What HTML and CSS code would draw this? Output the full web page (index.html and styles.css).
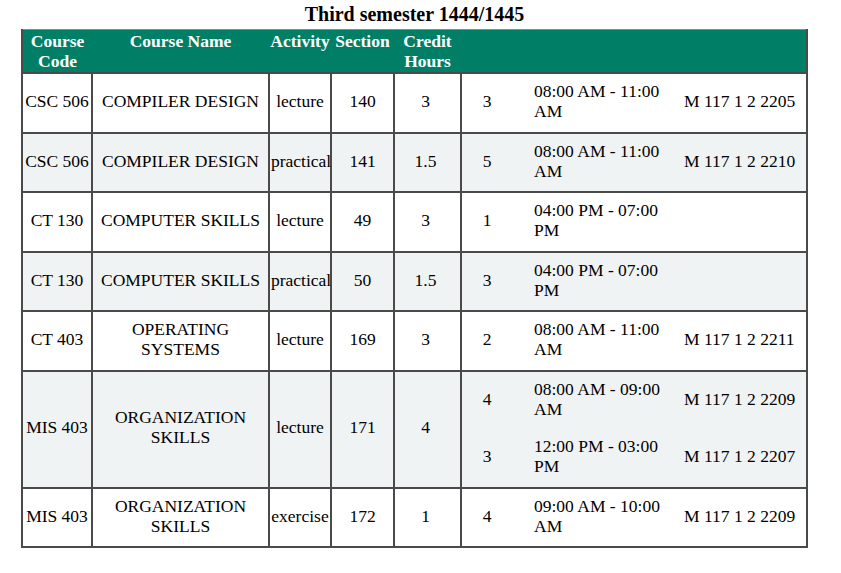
FILE: index.html
```html
<!DOCTYPE html>
<html>
<head>
<meta charset="utf-8">
<link rel="stylesheet" href="styles.css">
</head>
<body>
<div class="page">
  <h3 class="title">Third semester 1444/1445</h3>
  <table class="schedule">
    <colgroup>
      <col class="c-code"><col class="c-name"><col class="c-act"><col class="c-sec"><col class="c-cred"><col class="c-slots">
    </colgroup>
    <thead>
      <tr><th>Course Code</th><th>Course Name</th><th>Activity</th><th>Section</th><th>Credit Hours</th><th></th></tr>
    </thead>
    <tbody>
      <tr>
        <td>CSC 506</td><td>COMPILER DESIGN</td><td>lecture</td><td>140</td><td class="cred">3</td>
        <td class="slots"><div class="slot"><span class="day">3</span><span class="time">08:00 AM - 11:00 AM</span><span class="room">M 117 1 2 2205</span></div></td>
      </tr>
      <tr>
        <td>CSC 506</td><td>COMPILER DESIGN</td><td>practical</td><td>141</td><td class="cred">1.5</td>
        <td class="slots"><div class="slot"><span class="day">5</span><span class="time">08:00 AM - 11:00 AM</span><span class="room">M 117 1 2 2210</span></div></td>
      </tr>
      <tr>
        <td>CT 130</td><td>COMPUTER SKILLS</td><td>lecture</td><td>49</td><td class="cred">3</td>
        <td class="slots"><div class="slot"><span class="day">1</span><span class="time">04:00 PM - 07:00 PM</span><span class="room"></span></div></td>
      </tr>
      <tr>
        <td>CT 130</td><td>COMPUTER SKILLS</td><td>practical</td><td>50</td><td class="cred">1.5</td>
        <td class="slots"><div class="slot"><span class="day">3</span><span class="time">04:00 PM - 07:00 PM</span><span class="room"></span></div></td>
      </tr>
      <tr>
        <td>CT 403</td><td>OPERATING SYSTEMS</td><td>lecture</td><td>169</td><td class="cred">3</td>
        <td class="slots"><div class="slot"><span class="day">2</span><span class="time">08:00 AM - 11:00 AM</span><span class="room">M 117 1 2 2211</span></div></td>
      </tr>
      <tr>
        <td>MIS 403</td><td>ORGANIZATION SKILLS</td><td>lecture</td><td>171</td><td class="cred">4</td>
        <td class="slots">
          <div class="slot"><span class="day">4</span><span class="time">08:00 AM - 09:00 AM</span><span class="room">M 117 1 2 2209</span></div>
          <div class="slot"><span class="day">3</span><span class="time">12:00 PM - 03:00 PM</span><span class="room">M 117 1 2 2207</span></div>
        </td>
      </tr>
      <tr>
        <td>MIS 403</td><td>ORGANIZATION SKILLS</td><td>exercise</td><td>172</td><td class="cred">1</td>
        <td class="slots"><div class="slot"><span class="day">4</span><span class="time">09:00 AM - 10:00 AM</span><span class="room">M 117 1 2 2209</span></div></td>
      </tr>
    </tbody>
  </table>
</div>
</body>
</html>
```

FILE: styles.css
```css
html, body {
  margin: 0;
  padding: 0;
  background: #ffffff;
}

body {
  font-family: "Liberation Serif", "Times New Roman", serif;
  font-size: 17.5px;
  color: #000000;
}

.page {
  width: 787px;
  margin-left: 21px;
}

.title {
  margin: 3px 0 3px;
  font-size: 20px;
  line-height: 23px;
  font-weight: bold;
  text-align: center;
}

.schedule {
  width: 787px;
  table-layout: fixed;
  border-collapse: collapse;
  line-height: 20px;
}

.c-code { width: 70px; }
.c-name { width: 177px; }
.c-act { width: 62px; }
.c-sec { width: 63px; }
.c-cred { width: 67px; }
.c-slots { width: 346px; }

.schedule th {
  background: #007f66;
  color: #ffffff;
  font-weight: bold;
  vertical-align: top;
  text-align: center;
  padding: 1px 1px 1px;
  border: 0;
  border-top: 1px solid #8a8a8a;
}

.schedule th:first-child { border-left: 2px solid #4a4a4a; }
.schedule th:last-child { border-right: 2px solid #4a4a4a; }

.schedule td {
  border: 2px solid #4a4a4a;
  padding: 7px 1px 10.5px;
  text-align: center;
  vertical-align: middle;
  white-space: normal;
}

.schedule td.cred {
  padding-right: 5px;
}

.schedule tbody tr:nth-child(even) {
  background: #f0f3f4;
}

.schedule td.slots {
  padding: 0;
  vertical-align: top;
  text-align: left;
}

.slot {
  display: grid;
  grid-template-columns: 50px 172px 1fr;
  align-items: center;
  padding: 7px 0 10.5px;
}

.day {
  text-align: center;
}

.time {
  padding: 0 12px 0 22px;
}

.room {
  text-align: left;
}
```
